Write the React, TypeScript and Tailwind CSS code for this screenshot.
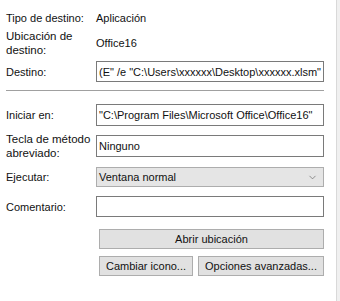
import { ChevronDown } from 'lucide-react'

const field =
  'flex h-[21px] w-[228px] items-center overflow-hidden whitespace-nowrap border border-[#7a7a7a] bg-white px-[2px]'
const btn =
  'flex h-[20px] items-center justify-center border border-[#adadad] bg-[#e1e1e1] text-[#111]'

export default function App() {
  return (
    <div
      className="flex h-[301px] w-[340px] bg-white text-[11px] leading-[14px] text-[#111]"
      style={{ fontFamily: '"Liberation Sans", Arial, sans-serif' }}
    >
      <div className="flex w-[336px] flex-col pl-[6px] pt-[11px]">
        <div className="flex h-[14px] items-center">
          <span className="w-[90px]">Tipo de destino:</span>
          <span>Aplicación</span>
        </div>

        <div className="mt-[4px] flex items-center">
          <span className="w-[90px] text-[11.5px]">
            Ubicación de
            <br />
            destino:
          </span>
          <span>Office16</span>
        </div>

        <div className="mt-[4px] flex items-center">
          <span className="w-[90px]">Destino:</span>
          <div className={field}>(E" /e "C:\Users\xxxxxx\Desktop\xxxxxx.xlsm"</div>
        </div>

        <div className="mt-[8px] h-px w-[318px] bg-[#a0a0a0]" />

        <div className="mt-[13px] flex items-center">
          <span className="w-[90px]">Iniciar en:</span>
          <div className={field + ' h-[22px]'}>"C:\Program Files\Microsoft Office\Office16"</div>
        </div>

        <div className="mt-[6px] flex items-center">
          <span className="w-[90px] text-[11.5px]">
            Tecla de método
            <br />
            abreviado:
          </span>
          <div className={field + ' h-[22px]'}>Ninguno</div>
        </div>

        <div className="mt-[7px] flex items-center">
          <span className="w-[90px]">Ejecutar:</span>
          <div className="flex h-[20px] w-[228px] items-center justify-between border border-[#adadad] bg-[#e5e5e5] pl-[2px] pr-[5px]">
            <span>Ventana normal</span>
            <ChevronDown size={11} strokeWidth={1.5} className="text-[#666]" />
          </div>
        </div>

        <div className="mt-[9px] flex items-center">
          <span className="w-[90px]">Comentario:</span>
          <div className={field} />
        </div>

        <div className="ml-[93px] mt-[12px] flex w-[225px] flex-col gap-[7px]">
          <div className={btn + ' w-full'}>Abrir ubicación</div>
          <div className="flex justify-between">
            <div className={btn + ' w-[94px]'}>Cambiar icono...</div>
            <div className={btn + ' w-[126px]'}>Opciones avanzadas...</div>
          </div>
        </div>
      </div>
      <div className="w-[4px] border-l border-[#d9d9d9] bg-[#f0f0f0]" />
    </div>
  )
}
